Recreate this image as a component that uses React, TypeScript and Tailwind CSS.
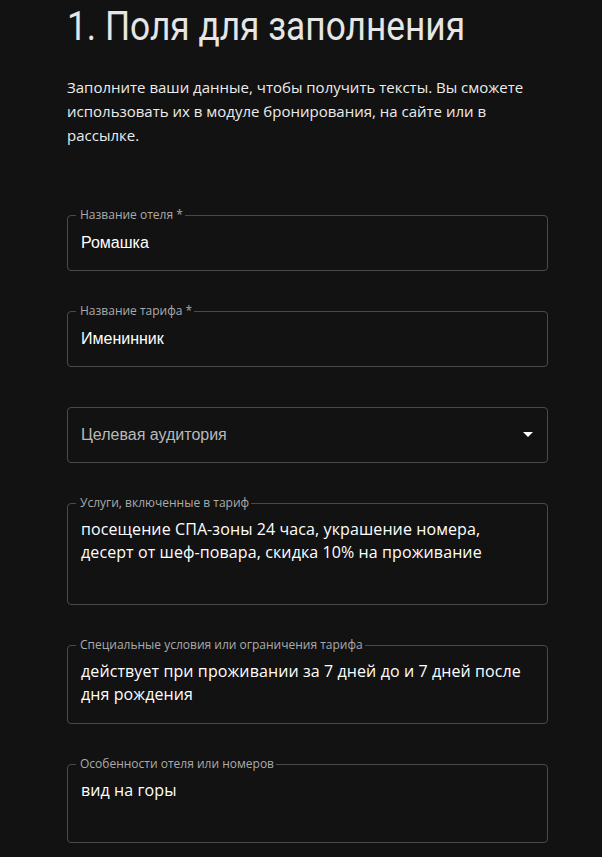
import React from "react";

const openSans = { fontFamily: '"Open Sans", "Noto Sans", sans-serif' };

function Field({
  label,
  children,
  pt,
  pb,
}: {
  label?: string;
  children: React.ReactNode;
  pt: string;
  pb: string;
}) {
  return (
    <fieldset className="w-[481px] border border-[#4a4a4a] rounded-[4px] px-[13px] m-0 min-w-0">
      <legend
        className={`h-[12px] text-[12px] leading-[12px] text-[#ababab] font-['Open_Sans',sans-serif] ${
          label ? "pl-[4px] pr-[2px] ml-[-5px]" : "p-0"
        }`}
      >
        {label}
      </legend>
      <div className={`${pt} ${pb}`}>{children}</div>
    </fieldset>
  );
}

export default function App() {
  return (
    <div className="min-h-[857px] w-[602px] bg-[#121212] pl-[67px] overflow-hidden">
      <h1 className="pt-[3px] text-[40px] leading-[48px] font-normal text-[#e6e6e6] font-['Roboto',sans-serif] whitespace-nowrap origin-left scale-x-[0.882]">
        1. Поля для заполнения
      </h1>
      <p className="mt-[24px] w-[470px] text-[15px] leading-[24px] text-[#ececec] font-['Open_Sans',sans-serif]">
        Заполните ваши данные, чтобы получить тексты. Вы сможете использовать их в модуле бронирования, на сайте или в
        рассылке.
      </p>

      <div className="mt-[62px] flex flex-col gap-[34px]">
        <Field label="Название отеля *" pt="pt-[10px]" pb="pb-[16px]">
          <div className="text-[16px] leading-[23px] text-white font-['Liberation_Sans',Arial,sans-serif]">Ромашка</div>
        </Field>
        <Field label="Название тарифа *" pt="pt-[10px]" pb="pb-[16px]">
          <div className="text-[16px] leading-[23px] text-white font-['Liberation_Sans',Arial,sans-serif]">Именинник</div>
        </Field>
        <Field pt="pt-[10px]" pb="pb-[16px]">
          <div className="flex items-center justify-between">
            <div className="text-[16px] leading-[23px] text-[#b9b9b9] font-['Liberation_Sans',Arial,sans-serif]">
              Целевая аудитория
            </div>
            <svg width="10" height="5" viewBox="0 0 10 5" className="mr-[1px]">
              <path d="M0 0 L10 0 L5 5 Z" fill="#ffffff" />
            </svg>
          </div>
        </Field>
        <Field label="Услуги, включенные в тариф" pt="pt-[9px]" pb="pb-[17px]">
          <div className="h-[69px] text-[16px] leading-[23px] tracking-[0.1px] text-white" style={openSans}>
            посещение СПА-зоны 24 часа, украшение номера, десерт от шеф-повара, скидка 10% на проживание
          </div>
        </Field>
        <Field label="Специальные условия или ограничения тарифа" pt="pt-[9px]" pb="pb-[17px]">
          <div className="h-[46px] text-[16px] leading-[23px] tracking-[0.1px] text-white" style={openSans}>
            действует при проживании за 7 дней до и 7 дней после дня рождения
          </div>
        </Field>
        <Field label="Особенности отеля или номеров" pt="pt-[9px]" pb="pb-[17px]">
          <div className="h-[46px] text-[16px] leading-[23px] tracking-[0.1px] text-white" style={openSans}>
            вид на горы
          </div>
        </Field>
      </div>
    </div>
  );
}
